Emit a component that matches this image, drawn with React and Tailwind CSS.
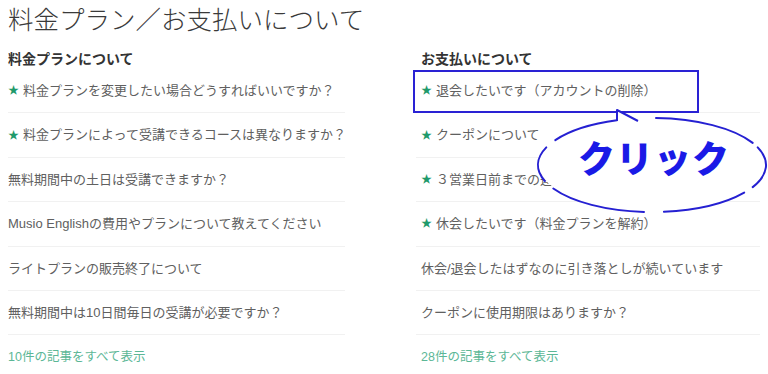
import React from 'react';

const FONT = { fontFamily: '"Liberation Sans", "Noto Sans CJK JP", sans-serif' };

const planItems = [
  { text: '料金プランを変更したい場合どうすればいいですか？', star: true },
  { text: '料金プランによって受講できるコースは異なりますか？', star: true },
  { text: '無料期間中の土日は受講できますか？' },
  { text: 'Musio Englishの費用やプランについて教えてください' },
  { text: 'ライトプランの販売終了について' },
  { text: '無料期間中は10日間毎日の受講が必要ですか？' },
];

const payItems = [
  { text: '退会したいです（アカウントの削除）', star: true, boxed: true },
  { text: 'クーポンについて', star: true },
  { text: '３営業日前までの連絡', star: true },
  { text: '休会したいです（料金プランを解約）', star: true },
  { text: '休会/退会したはずなのに引き落としが続いています' },
  { text: 'クーポンに使用期限はありますか？' },
];

function Row({ item, pad }) {
  return (
    <div className={`relative flex items-center h-[44.4px] border-b border-[#f1f1f1] ${pad}`}>
      {item.star && <span className="text-[#1f9a6b] text-[11px] mr-[4px] leading-none">★</span>}
      <span className="text-[13px] text-[#606060] whitespace-nowrap">{item.text}</span>
      {item.boxed && (
        <div className="absolute left-[-3px] top-[1px] w-[286px] h-[43px] border-2 border-[#2a22d4]" />
      )}
    </div>
  );
}

function Column({ title, items, more, pad = '' }) {
  return (
    <div className="flex flex-col">
      <h2 className={`mt-[9px] text-[14px] leading-[20px] font-bold text-[#333] ${pad}`}>{title}</h2>
      {items.map((it) => (
        <Row key={it.text} item={it} pad={pad} />
      ))}
      <a className={`pt-[13px] text-[12.5px] text-[#5cb796] ${pad}`}>{more}</a>
    </div>
  );
}

// callout ellipse pieces, page coords
const CX = 652, CY = 165, RX = 114, RY = 47;
function pt(deg) {
  const t = (deg * Math.PI) / 180;
  return [CX + RX * Math.cos(t), CY + RY * Math.sin(t)];
}
function arc(a, b) {
  const [x1, y1] = pt(a);
  const [x2, y2] = pt(b);
  return `M${x1.toFixed(1)} ${y1.toFixed(1)} A${RX} ${RY} 0 0 1 ${x2.toFixed(1)} ${y2.toFixed(1)}`;
}
const segments = [
  [-22, 28],
  [36, 84],
  [94, 150],
  [160, 202],
  [212, 252],
  [272, 332],
];

function Callout() {
  return (
    <>
      <svg className="absolute left-0 top-0 pointer-events-none" width="768" height="374">
        <ellipse cx={CX} cy={CY} rx={RX - 1} ry={RY - 1} fill="#fff" />
        <path d="M617 122 L617 110 L638 121 Z" fill="#fff" />
        {segments.map(([a, b]) => (
          <path key={a} d={arc(a, b)} fill="none" stroke="#2520d2" strokeWidth="2" strokeLinecap="round" />
        ))}
        <path d="M617 121 L617 110 L638 121" fill="none" stroke="#2520d2" strokeWidth="2" strokeLinejoin="round" />
      </svg>
      <div className="absolute left-[578px] top-[137px] text-[37px] leading-[48px] font-black text-[#1a1ae6] tracking-[1px] pointer-events-none">
        クリック
      </div>
    </>
  );
}

export default function App() {
  return (
    <div className="relative w-[768px] h-[374px] overflow-hidden bg-white px-2" style={FONT}>
      <h1 className="h-[40px] leading-[40px] text-[25.5px] font-light text-[#3a3a3a]">料金プラン／お支払いについて</h1>
      <div className="grid grid-cols-[337px_344px] gap-x-[71px]">
        <Column title="料金プランについて" items={planItems} more="10件の記事をすべて表示" />
        <Column title="お支払いについて" items={payItems} more="28件の記事をすべて表示" pad="pl-[5px]" />
      </div>
      <Callout />
    </div>
  );
}
